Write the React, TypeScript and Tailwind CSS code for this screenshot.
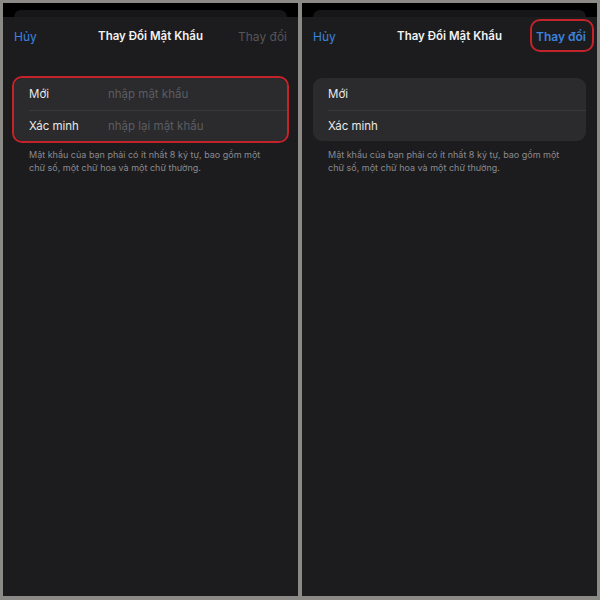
import React from "react";

type PanelProps = {
  highlightFields?: boolean;
  highlightAction?: boolean;
};

const font = { fontFamily: "Inter, 'Noto Sans', sans-serif" };

const Panel: React.FC<PanelProps> = ({ highlightFields, highlightAction }) => {
  return (
    <div className="flex h-full w-[295px] flex-col bg-black">
      {/* sheet behind the modal */}
      <div className="px-[11px] pt-[7px]">
        <div className="h-[7px] rounded-t-[10px] bg-[#161618]" />
      </div>

      <div className="flex flex-1 flex-col bg-[#1c1c1e]">
        {/* nav bar */}
        <div className="relative flex h-[40px] items-center justify-between px-[11px] text-[12px]">
          <span className="text-[#3d83dd]">Hủy</span>
          <span className="absolute left-1/2 -translate-x-1/2 text-[11.5px] font-semibold text-[#f2f2f2]">
            Thay Đổi Mật Khẩu
          </span>
          <span className="relative">
            <span className={highlightAction ? "font-semibold text-[#3d83dd]" : "text-[#55555a]"}>
              Thay đổi
            </span>
            {highlightAction && (
              <span className="absolute -bottom-[6px] -left-[6px] -right-[8px] -top-[9px] rounded-[10px] border-2 border-[#c3232b]" />
            )}
          </span>
        </div>

        {/* fields */}
        <div className="relative mx-[11px] mt-[21px] rounded-[9px] bg-[#2b2b2d] text-[11.5px]">
          <div className="flex h-[32px] items-center pl-[15px] pt-[1px]">
            <span className="w-[79px] text-[#e8e8e8]">Mới</span>
            {highlightFields && <span className="text-[#5c5c61]">nhập mật khẩu</span>}
          </div>
          <div className="ml-[15px] h-px bg-[#38383a]" />
          <div className="flex h-[30px] items-center pl-[15px] pt-[1px]">
            <span className="w-[79px] text-[#e8e8e8]">Xác minh</span>
            {highlightFields && <span className="text-[#5c5c61]">nhập lại mật khẩu</span>}
          </div>
          {highlightFields && (
            <span className="absolute -inset-[2px] rounded-[10px] border-2 border-[#c3232b]" />
          )}
        </div>

        <p className="mt-[7px] whitespace-nowrap px-[26px] text-[9px] leading-[13px] text-[#8a8a8f]">
          Mật khẩu của bạn phải có ít nhất 8 ký tự, bao gồm một
          <br />
          chữ số, một chữ hoa và một chữ thường.
        </p>
      </div>
    </div>
  );
};

const App: React.FC = () => {
  return (
    <div
      className="flex h-[600px] w-[600px] gap-[4px] bg-[#8c8a87] pb-[4px] pl-[3px] pr-[3px] pt-[3px]"
      style={font}
    >
      <Panel highlightFields />
      <Panel highlightAction />
    </div>
  );
};

export default App;
